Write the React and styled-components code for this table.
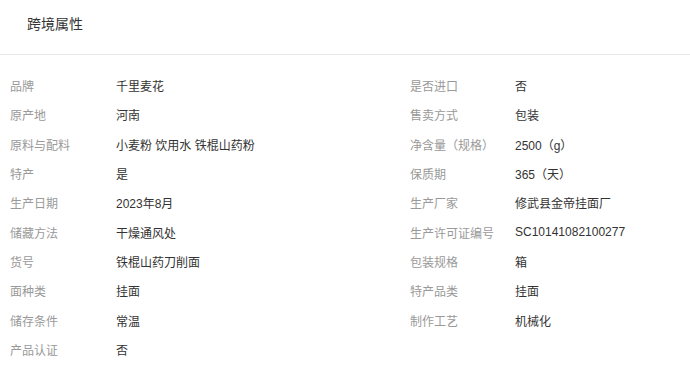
import React from "react";
import styled, { createGlobalStyle } from "styled-components";

const GlobalStyle = createGlobalStyle`
  body {
    margin: 0;
    background: #fff;
    font-family: "Liberation Sans", "Noto Sans CJK SC", sans-serif;
  }
`;

const Panel = styled.div`
  width: 690px;
  background: #fff;
`;

const Header = styled.div`
  height: 55px;
  box-sizing: border-box;
  padding: 14px 27px 0;
  font-size: 14px;
  line-height: 20px;
  color: #333;
  border-bottom: 1px solid #e6e6e6;
`;

const Grid = styled.div`
  display: grid;
  grid-template-columns: 106px 294px 105px 1fr;
  grid-auto-rows: 29.3px;
  padding: 16px 0 0 10px;
  font-size: 12px;
  align-items: center;
`;

const Label = styled.div`
  color: #999;
  white-space: nowrap;
`;

const Value = styled.div`
  color: #333;
  white-space: nowrap;
`;

const attrs = [
  ["品牌", "千里麦花", "是否进口", "否"],
  ["原产地", "河南", "售卖方式", "包装"],
  ["原料与配料", "小麦粉 饮用水 铁棍山药粉", "净含量（规格）", "2500（g）"],
  ["特产", "是", "保质期", "365（天）"],
  ["生产日期", "2023年8月", "生产厂家", "修武县金帝挂面厂"],
  ["储藏方法", "干燥通风处", "生产许可证编号", "SC10141082100277"],
  ["货号", "铁棍山药刀削面", "包装规格", "箱"],
  ["面种类", "挂面", "特产品类", "挂面"],
  ["储存条件", "常温", "制作工艺", "机械化"],
  ["产品认证", "否"],
];

export default function App() {
  return (
    <Panel>
      <GlobalStyle />
      <Header>跨境属性</Header>
      <Grid>
        {attrs.map((row, i) => (
          <React.Fragment key={i}>
            <Label>{row[0]}</Label>
            <Value>{row[1]}</Value>
            <Label>{row[2] || ""}</Label>
            <Value>{row[3] || ""}</Value>
          </React.Fragment>
        ))}
      </Grid>
    </Panel>
  );
}
